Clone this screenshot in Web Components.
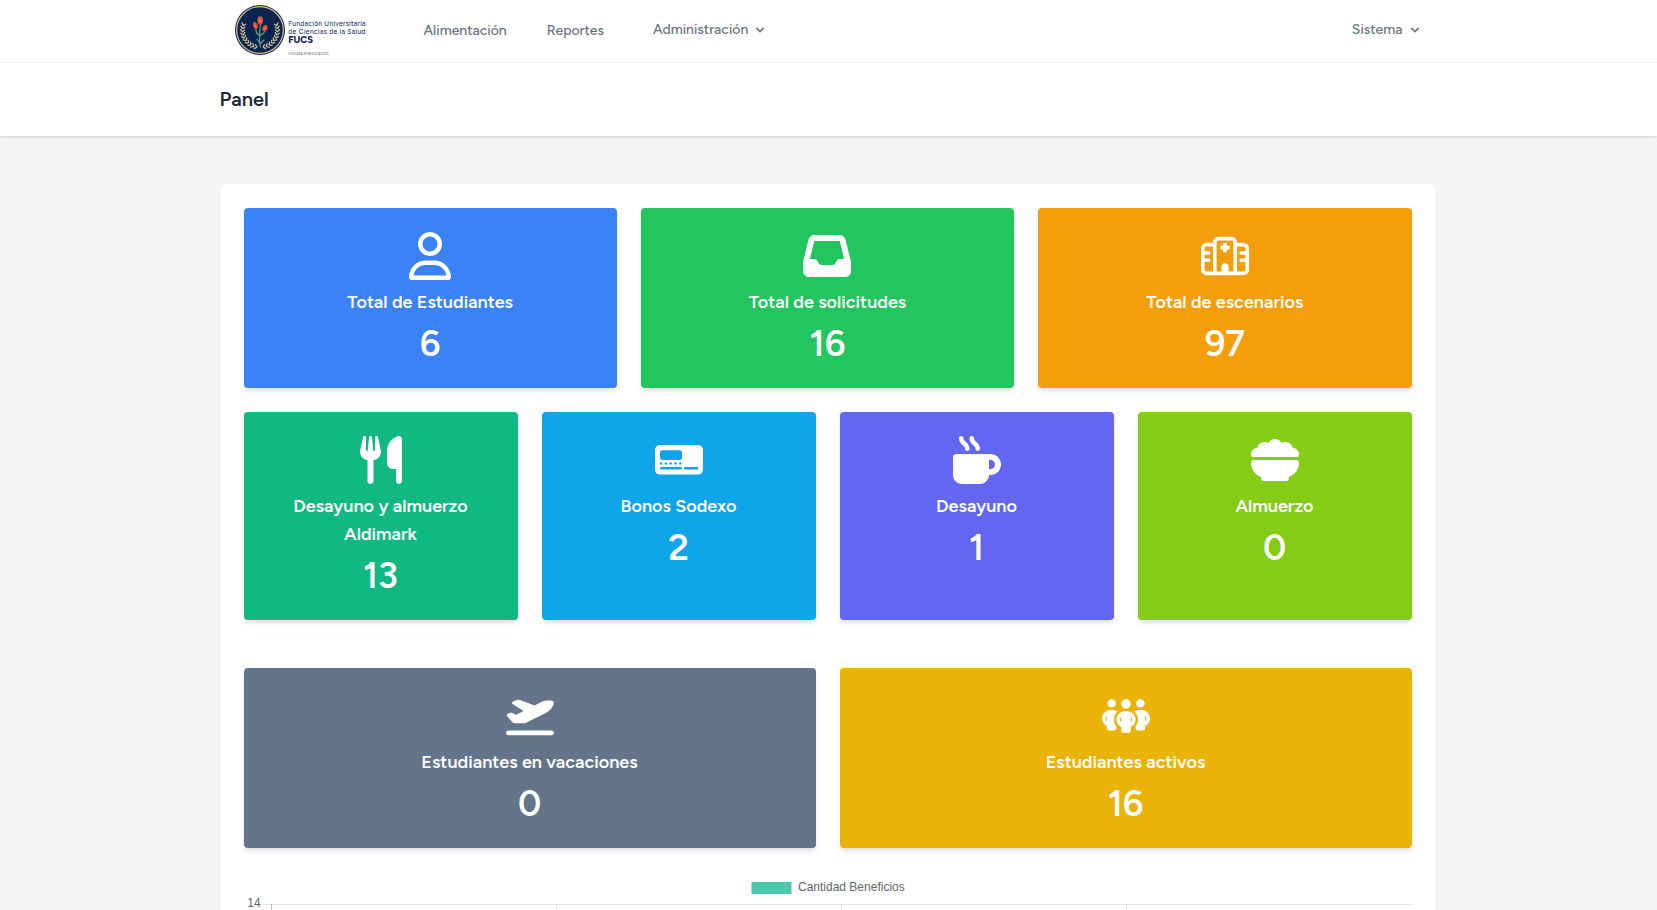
<!DOCTYPE html>
<html lang="es">
<head>
<meta charset="utf-8">
<title>Panel</title>
<style>
html,body{margin:0;height:100%;overflow:hidden}
body{background:#f3f4f6;font-family:Figtree,Lato,"Open Sans",sans-serif;color:#1f2937}
</style>
</head>
<body>
<app-page></app-page>
<script>
function define(name, html, setup) {
  const template = document.createElement('template');
  template.innerHTML = html;
  customElements.define(name, class extends HTMLElement {
    connectedCallback() {
      if (this.shadowRoot) return;
      this.attachShadow({ mode: 'open' }).append(template.content.cloneNode(true));
      if (setup) setup(this, this.shadowRoot);
    }
  });
}

const icons = {
  user: ['0 0 448 512', '<path d="M304 128a80 80 0 1 0 -160 0 80 80 0 1 0 160 0zM96 128a128 128 0 1 1 256 0A128 128 0 1 1 96 128zM49.3 464H398.7c-8.9-63.3-63.3-112-129-112H178.3c-65.7 0-120.1 48.7-129 112zM0 482.3C0 383.8 79.8 304 178.3 304h91.4C368.2 304 448 383.8 448 482.3c0 16.4-13.3 29.7-29.7 29.7H29.7C13.3 512 0 498.7 0 482.3z"/>'],
  inbox: ['0 0 512 512', '<path d="M121 32C91.6 32 66 52 58.9 80.5L1.9 308.4C.6 313.5 0 318.7 0 323.9V416c0 35.3 28.7 64 64 64H448c35.3 0 64-28.7 64-64V323.9c0-5.2-.6-10.4-1.9-15.5l-57-227.9C446 52 420.4 32 391 32H121zm0 64H391l48 192H387.8c-12.1 0-23.2 6.8-28.6 17.7l-14.3 28.6c-5.4 10.8-16.5 17.7-28.6 17.7H195.8c-12.1 0-23.2-6.8-28.6-17.7l-14.3-28.6c-5.4-10.8-16.5-17.7-28.6-17.7H73L121 96z"/>'],
  hospital: ['0 0 640 512', '<g fill="none" stroke="#fff" stroke-width="48" stroke-linecap="round"><path d="M184 104H72a48 48 0 0 0-48 48V440a48 48 0 0 0 48 48H568a48 48 0 0 0 48-48V152a48 48 0 0 0-48-48H456"/><path d="M184 488V72a48 48 0 0 1 48-48H408a48 48 0 0 1 48 48V488M24 216h80M24 312h80M616 216h-80M616 312h-80"/><path stroke-linecap="butt" d="M320 82v124M258 144h124"/></g><path d="M272 488V400a48 48 0 0 1 96 0v88z"/>'],
  utensils: ['0 0 448 512', '<path d="M416 0C400 0 288 32 288 176V288c0 35.3 28.7 64 64 64h32V480c0 17.7 14.3 32 32 32s32-14.3 32-32V352 240 32c0-17.7-14.3-32-32-32zM64 16C64 7.8 57.9 1 49.7 .1S34.2 4.6 32.4 12.5L2.1 148.8C.7 155.1 0 161.5 0 167.9c0 45.9 35.1 83.6 80 87.7V480c0 17.7 14.3 32 32 32s32-14.3 32-32V255.6c44.9-4.1 80-41.8 80-87.7c0-6.4-.7-12.8-2.1-19.1L191.6 12.5c-1.8-8-9.3-13.3-17.4-12.4S160 7.8 160 16V150.2c0 5.4-4.4 9.8-9.8 9.8c-5.1 0-9.3-3.9-9.8-9L127.9 14.6C127.2 6.3 120.3 0 112 0s-15.2 6.3-15.9 14.6L83.7 151c-.5 5.1-4.7 9-9.8 9c-5.4 0-9.8-4.4-9.8-9.8V16z"/>'],
  voucher: ['0 0 48 48', '<rect y="9" width="48" height="29.6" rx="5"/><g fill="#0ea5e9"><rect x="5" y="14.3" width="22" height="9.7" rx="2.5"/><circle cx="6.1" cy="27.5" r="1.25"/><circle cx="10.9" cy="27.5" r="1.25"/><circle cx="15.7" cy="27.5" r="1.25"/><circle cx="20.5" cy="27.5" r="1.25"/><circle cx="25.3" cy="27.5" r="1.25"/><rect x="5" y="31.1" width="22" height="2.3" rx="1.1"/><rect x="29" y="31.1" width="14.4" height="2.3" rx="1.1"/></g>'],
  mug: ['0 0 512 512', '<path d="M88 0C74.7 0 64 10.7 64 24c0 38.9 23.4 59.4 39.1 73.1l1.1 1C120.5 112.3 128 119.9 128 136c0 13.3 10.7 24 24 24s24-10.7 24-24c0-38.9-23.4-59.4-39.1-73.1l-1.1-1C119.5 47.7 112 40.1 112 24c0-13.3-10.7-24-24-24zM32 192c-17.7 0-32 14.3-32 32V416c0 53 43 96 96 96H288c53 0 96-43 96-96h16c61.9 0 112-50.1 112-112s-50.1-112-112-112H352 32zm352 64h16c26.5 0 48 21.5 48 48s-21.5 48-48 48H384V256zM224 24c0-13.3-10.7-24-24-24s-24 10.7-24 24c0 38.9 23.4 59.4 39.1 73.1l1.1 1C232.5 112.3 240 119.9 240 136c0 13.3 10.7 24 24 24s24-10.7 24-24c0-38.9-23.4-59.4-39.1-73.1l-1.1-1C231.5 47.7 224 40.1 224 24z"/>'],
  bowl: ['0 0 512 512', '<path d="M0 192c0-35.3 28.7-64 64-64c.5 0 1.1 0 1.6 0C73 91.5 105.3 64 144 64c15 0 29 4.1 40.9 11.2C198.2 49.6 225.1 32 256 32s57.8 17.6 71.1 43.2C339 68.1 353 64 368 64c38.7 0 71 27.5 78.4 64c.5 0 1.1 0 1.6 0c35.3 0 64 28.7 64 64c0 11.7-3.1 22.6-8.6 32H8.6C3.1 214.6 0 203.7 0 192zm0 91.4C0 268.3 12.3 256 27.4 256H484.6c15.1 0 27.4 12.3 27.4 27.4c0 70.5-44.4 130.7-106.7 154.1L403.5 452c-2 16-15.6 28-31.8 28H140.2c-16.1 0-29.8-12-31.8-28l-1.8-14.4C44.4 414.1 0 353.9 0 283.4z"/>'],
  plane: ['0 0 640 512', '<path d="M381 114.9L186.1 41.8c-16.7-6.2-35.2-5.3-51.1 2.7L89.1 67.4C78 73 77.2 88.5 87.6 95.2l146.9 94.5L136 240 77.8 214.1c-8.7-3.9-18.8-3.7-27.3 .6L18.3 230.8c-9.3 4.7-11.8 16.8-5 24.7l73.1 85.3c6.1 7.1 15 11.2 24.3 11.2H248.4c5 0 9.9-1.2 14.3-3.4L535.6 212.2c46.5-23.3 82.5-63.3 100.8-112C645.9 75 627.2 48 600.2 48H542.8c-20.2 0-40.2 4.8-58.2 14L381 114.9zM0 480c0 17.7 14.3 32 32 32H608c17.7 0 32-14.3 32-32s-14.3-32-32-32H32c-17.7 0-32 14.3-32 32z"/>'],
  people: ['0 0 640 512', '<path d="M72 88a56 56 0 1 1 112 0A56 56 0 1 1 72 88zM64 245.7C54 256.9 48 271.8 48 288s6 31.1 16 42.3V245.7zm144.4-49.3C178.7 222.7 160 261.2 160 304c0 34.3 12 65.8 32 90.5V416c0 17.7-14.3 32-32 32H96c-17.7 0-32-14.3-32-32V389.2C26.2 371.2 0 332.7 0 288c0-61.9 50.1-112 112-112h32c24 0 46.2 7.5 64.4 20.3zM448 416V394.5c20-24.7 32-56.2 32-90.5c0-42.8-18.7-81.3-48.4-107.7C449.8 183.5 472 176 496 176h32c61.9 0 112 50.1 112 112c0 44.7-26.2 83.2-64 101.2V416c0 17.7-14.3 32-32 32H480c-17.7 0-32-14.3-32-32zm8-328a56 56 0 1 1 112 0A56 56 0 1 1 456 88zM576 245.7v84.7c10-11.3 16-26.1 16-42.3s-6-31.1-16-42.3zM320 32a64 64 0 1 1 0 128 64 64 0 1 1 0-128zM240 304c0 16.2 6 31 16 42.3V261.7c-10 11.3-16 26.1-16 42.3zm144-42.3v84.7c10-11.3 16-26.1 16-42.3s-6-31.1-16-42.3zM448 304c0 44.7-26.2 83.2-64 101.2V448c0 17.7-14.3 32-32 32H288c-17.7 0-32-14.3-32-32V405.2c-37.8-18-64-56.5-64-101.2c0-61.9 50.1-112 112-112h32c61.9 0 112 50.1 112 112z"/>']
};

define('stat-icon', `<style>:host{display:block;width:48px;height:48px}svg{display:block;width:48px;height:48px;fill:#fff}</style><svg></svg>`,
  (host, root) => {
    const [box, shapes] = icons[host.getAttribute('name')];
    const svg = root.querySelector('svg');
    svg.setAttribute('viewBox', box);
    svg.innerHTML = shapes;
  });

define('stat-card', `<style>
:host{display:flex;flex-direction:column;align-items:center;box-sizing:border-box;padding:24px;border-radius:4px;color:#fff;text-align:center;box-shadow:0 4px 6px -1px rgba(0,0,0,.1),0 2px 4px -2px rgba(0,0,0,.1)}
.title{margin-top:8px;font-size:18px;line-height:28px;font-weight:600}
.value{margin-top:8px;font-size:36px;line-height:40px;font-weight:600}
</style><div class="title"><slot></slot></div><div class="value"><slot name="value"></slot></div>`,
  (host, root) => {
    host.style.background = host.getAttribute('color');
    const icon = document.createElement('stat-icon');
    icon.setAttribute('name', host.getAttribute('icon'));
    root.querySelector('.title').before(icon);
  });

define('card-row', `<style>:host{display:grid;grid-template-columns:repeat(var(--cols),1fr);gap:24px}</style><slot></slot>`);

define('chevron-down', `<style>:host{display:block;width:16px;height:16px}svg{display:block}</style>
<svg width="16" height="16" viewBox="0 0 20 20" fill="#6b7280"><path fill-rule="evenodd" d="M5.293 7.293a1 1 0 011.414 0L10 10.586l3.293-3.293a1 1 0 111.414 1.414l-4 4a1 1 0 01-1.414 0l-4-4a1 1 0 010-1.414z"/></svg>`);

define('nav-item', `<style>:host{display:flex;align-items:center;font-size:14px;line-height:20px;color:#6b7280;font-weight:500;gap:4px}</style><slot></slot>`);

define('fucs-logo', `<style>:host{display:block;width:140px;height:62px}svg{display:block}text{font-family:Figtree,Lato,sans-serif;fill:#2b3d68}</style>
<svg width="140" height="62" viewBox="0 0 140 62">
<circle cx="25" cy="30" r="25" fill="#14295a"/><circle cx="25" cy="30" r="23.3" fill="#082453" stroke="#d9b982" stroke-width="1.2"/>
<g id="wreath" fill="none" stroke="#d3ba8a" stroke-width="1.3"></g>
<g fill="none" stroke="#67a875" stroke-width="1.1" stroke-linecap="round"><path d="M25 23c.5 8-1.5 15 .3 24M25 36q-5-3-4-9M25 35q5-1 5-6M25 43l-3-4M25 44l4-4"/></g>
<g fill="#df523d"><ellipse cx="25.2" cy="20.5" rx="2.8" ry="4.2"/><ellipse cx="20.3" cy="25.5" rx="2.3" ry="3.6" transform="rotate(-18 20.3 25.5)"/><ellipse cx="30" cy="28.2" rx="2.5" ry="3.3" transform="rotate(20 30 28)"/></g>
<g fill="#ef9b61"><circle cx="25.2" cy="21" r="1"/><circle cx="20.4" cy="26" r=".8"/><circle cx="30" cy="28.5" r=".8"/></g>
<text x="53.3" y="26" font-size="6.8" font-weight="500" textLength="77.3" lengthAdjust="spacing">Fundación Universitaria</text>
<text x="53.3" y="33.6" font-size="6.8" font-weight="500" textLength="77.3" lengthAdjust="spacing">de Ciencias de la Salud</text>
<text x="53.3" y="43" font-size="9.6" font-weight="800" textLength="24.7" lengthAdjust="spacing" style="fill:#14295a">FUCS</text>
<text x="53.3" y="54.6" font-size="2.8" textLength="40" style="fill:#444">VIGILADA MINEDUCACIÓN</text>
</svg>`, (host, root) => {
  let d = '';
  for (let i = 0; i < 10; i++) {
    const a = (100 + i * 10.5) * Math.PI / 180;
    for (const s of [1, -1]) {
      const px = r => (25 + s * r * Math.cos(a)).toFixed(1), py = r => (30 + r * Math.sin(a)).toFixed(1);
      const b = a + .15;
      const qx = r => (25 + s * r * Math.cos(b)).toFixed(1), qy = r => (30 + r * Math.sin(b)).toFixed(1);
      d += `M${px(17.5)} ${py(17.5)}L${qx(19.8)} ${qy(19.8)}M${px(17.5)} ${py(17.5)}L${qx(15.2)} ${qy(15.2)}`;
    }
  }
  root.querySelector('#wreath').innerHTML = `<path d="${d}"/>`;
});

define('top-nav', `<style>
:host{display:flex;box-sizing:border-box;height:63px;padding:0 221.5px 0 235px;background:#fff;border-bottom:1px solid #f0f1f3;align-items:flex-start}
nav{display:flex;flex:1;padding-top:21px}
nav-item:nth-child(1){margin-left:48.5px}
nav-item:nth-child(2){margin-left:40px}
nav-item:nth-child(3){margin-left:49px;margin-top:-1px;align-self:flex-start}
nav-item:nth-child(4){margin-left:auto;margin-right:13px;margin-top:-1px;align-self:flex-start}
</style><fucs-logo></fucs-logo><nav>
<nav-item>Alimentación</nav-item>
<nav-item>Reportes</nav-item>
<nav-item>Administración<chevron-down></chevron-down></nav-item>
<nav-item>Sistema<chevron-down></chevron-down></nav-item>
</nav>`);

define('page-header', `<style>:host{display:block;position:relative;background:#fff;padding:24px 219.5px;font-size:20px;line-height:25px;font-weight:600;box-shadow:0 1px 3px rgba(0,0,0,.1),0 1px 2px -1px rgba(0,0,0,.1)}</style><slot></slot>`);

define('benefit-chart', `<style>:host{display:block;margin-left:.5px}svg{display:block}text{font:12px "Liberation Sans",Arial,sans-serif;fill:#666}</style>
<svg width="1168" height="400" viewBox="0 0 1168 400">
<rect x="507.5" y="10" width="40" height="12" fill="#48c9b0"/><text x="554" y="19">Cantidad Beneficios</text>
<text x="3.3" y="35">14</text>
<g stroke="#e5e5e5"><path d="M19 32.5H1167.5"/><path d="M312.5 33V400M597.5 33V400M882.5 33V400"/></g><path stroke="#bfbfbf" d="M27.5 32V400"/>
</svg>`);

define('app-page', `<style>
:host{display:block;height:100%;overflow:hidden}
main{margin:48px 221.5px 0 219.5px;padding:24px;background:#fff;border-radius:8px;box-shadow:0 1px 2px rgba(0,0,0,.05);display:flex;flex-direction:column;gap:24px}
.late{margin-top:24px}
</style>
<top-nav></top-nav>
<page-header>Panel</page-header>
<main>
<card-row style="--cols:3">
<stat-card icon="user" color="#3b82f6">Total de Estudiantes<span slot="value">6</span></stat-card>
<stat-card icon="inbox" color="#22c55e">Total de solicitudes<span slot="value">16</span></stat-card>
<stat-card icon="hospital" color="#f59e0b">Total de escenarios<span slot="value">97</span></stat-card>
</card-row>
<card-row style="--cols:4">
<stat-card icon="utensils" color="#10b981">Desayuno y almuerzo Aldimark<span slot="value">13</span></stat-card>
<stat-card icon="voucher" color="#0ea5e9">Bonos Sodexo<span slot="value">2</span></stat-card>
<stat-card icon="mug" color="#6366f1">Desayuno<span slot="value">1</span></stat-card>
<stat-card icon="bowl" color="#84cc16">Almuerzo<span slot="value">0</span></stat-card>
</card-row>
<card-row class="late" style="--cols:2">
<stat-card icon="plane" color="#64748b">Estudiantes en vacaciones<span slot="value">0</span></stat-card>
<stat-card icon="people" color="#eab308">Estudiantes activos<span slot="value">16</span></stat-card>
</card-row>
<benefit-chart></benefit-chart>
</main>`);
</script>
</body>
</html>
